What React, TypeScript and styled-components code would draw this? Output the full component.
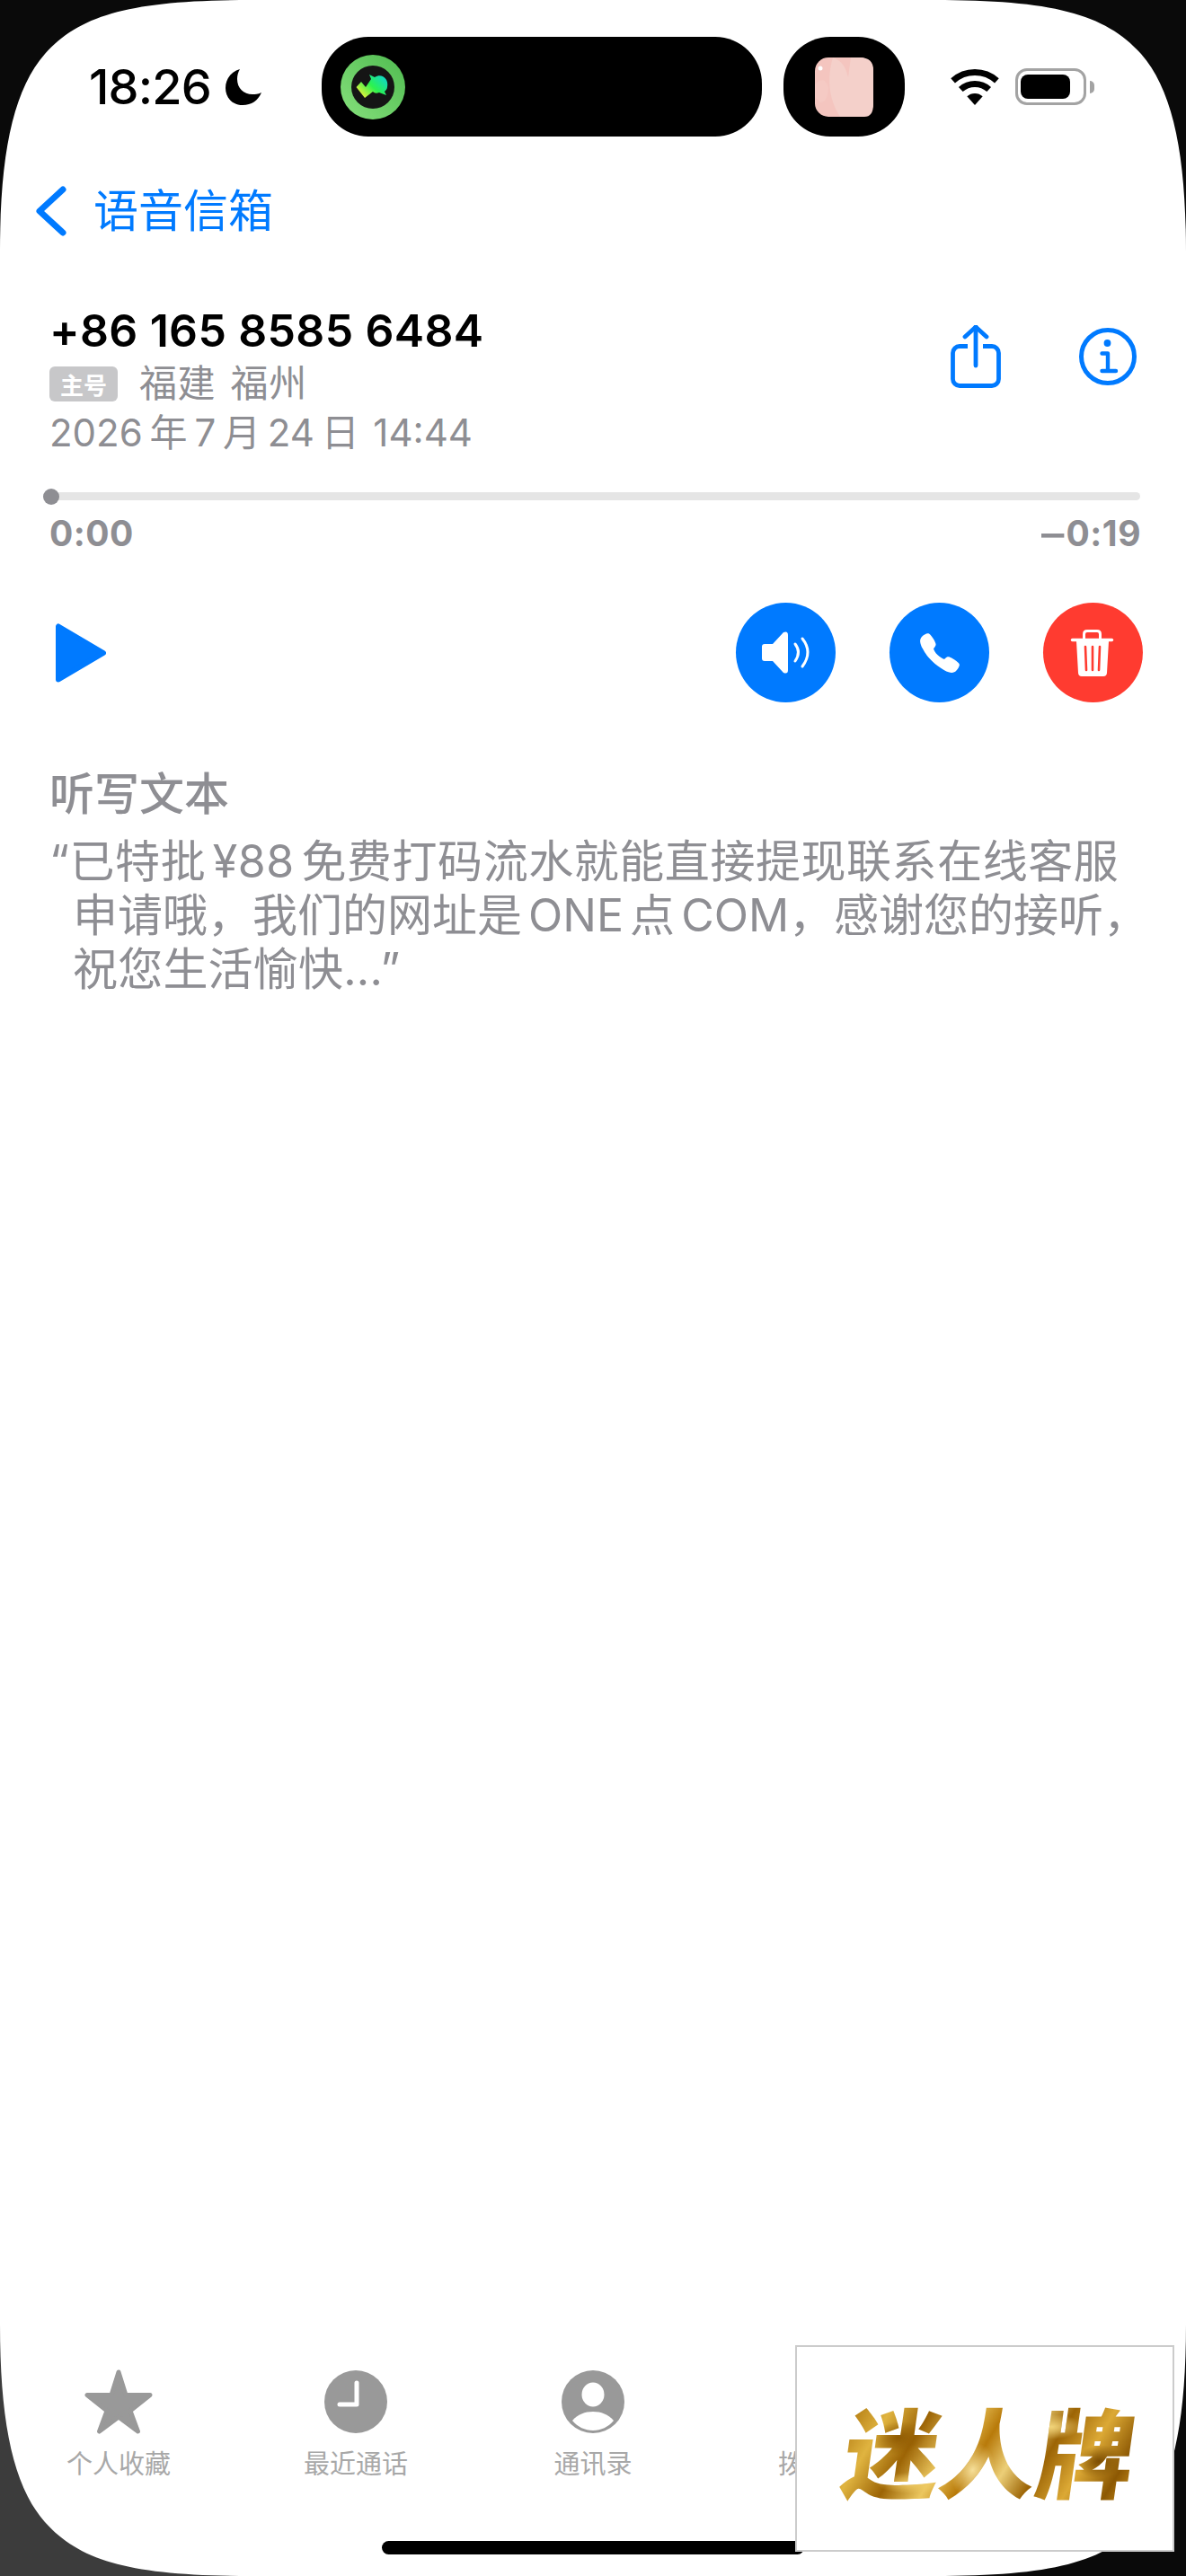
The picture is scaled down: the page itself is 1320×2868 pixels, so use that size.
import React from 'react';
import styled, { createGlobalStyle } from 'styled-components';
import { IoCall } from 'react-icons/io5';

const BLUE = '#007aff';
const RED = '#ff3b30';
const GREY = '#8e8e93';
const TAB_GREY = '#999999';

const GlobalStyle = createGlobalStyle`
  html, body {
    margin: 0;
    padding: 0;
    background: #fff;
  }
  body {
    font-family: Inter, "Noto Sans CJK SC", sans-serif;
  }
`;

const Screen = styled.div`
  position: relative;
  width: 1320px;
  height: 2868px;
  display: flex;
  flex-direction: column;
  overflow: hidden;
  background: #fff;
  font-family: Inter, "Noto Sans CJK SC", sans-serif;
`;

const Corner = styled.svg<{ $x: 'left' | 'right'; $y: 'top' | 'bottom' }>`
  position: absolute;
  width: 280px;
  height: 280px;
  ${({ $x }) => $x}: 0;
  ${({ $y }) => $y}: 0;
  transform: scale(${({ $x }) => ($x === 'left' ? 1 : -1)}, ${({ $y }) => ($y === 'top' ? 1 : -1)});
`;

const StatusBar = styled.div`
  display: flex;
  align-items: center;
  height: 111px;
  margin-top: 41px;
  padding-left: 99px;
`;

const TimeGroup = styled.div`
  display: flex;
  align-items: center;
  gap: 16px;
  width: 259px;
`;

const Clock = styled.span`
  font-size: 54px;
  font-weight: 500;
  line-height: 50px;
  letter-spacing: -0.8px;
  color: #000;
`;

const Island = styled.div`
  display: flex;
  align-items: center;
  width: 490px;
  height: 111px;
  padding-left: 21px;
  box-sizing: border-box;
  border-radius: 52px;
  background: #000;
`;

const IslandSide = styled.div`
  display: flex;
  align-items: center;
  justify-content: center;
  width: 135px;
  height: 111px;
  margin-left: 24px;
  border-radius: 52px;
  background: #000;
`;

const StatusIcons = styled.div`
  display: flex;
  align-items: center;
  margin-left: 51px;
  gap: 18px;
`;

const Battery = styled.div`
  display: flex;
  align-items: center;
  gap: 4px;
`;

const BatteryBody = styled.div`
  display: flex;
  align-items: center;
  width: 79px;
  height: 41px;
  padding-left: 3px;
  box-sizing: border-box;
  border: 3px solid #a3a3a3;
  border-radius: 13px;
`;

const BatteryLevel = styled.div`
  width: 55px;
  height: 27px;
  border-radius: 8px;
  background: #000;
`;

const BatteryCap = styled.div`
  width: 5px;
  height: 14px;
  border-radius: 0 5px 5px 0;
  background: #a3a3a3;
`;

const NavBar = styled.div`
  display: flex;
  align-items: center;
  gap: 30px;
  height: 166px;
  padding-left: 40px;
  color: ${BLUE};
`;

const NavTitle = styled.span`
  font-size: 50px;
  line-height: 60px;
`;

const Header = styled.div`
  display: flex;
  justify-content: space-between;
  margin-top: 25px;
  padding: 0 55px 0 55px;
`;

const Details = styled.div`
  display: flex;
  flex-direction: column;
`;

const PhoneNumber = styled.div`
  font-size: 50px;
  font-weight: 600;
  line-height: 50px;
  letter-spacing: 0.35px;
  color: #000;
`;

const MetaRow = styled.div`
  display: flex;
  align-items: center;
  height: 40px;
  margin-top: 14px;
`;

const SimBadge = styled.span`
  display: flex;
  align-items: center;
  justify-content: center;
  width: 76px;
  height: 39px;
  margin-right: 24px;
  border-radius: 6px;
  background: #c7c7c9;
  color: #fff;
  font-size: 26px;
  font-weight: 700;
`;

const MetaText = styled.span`
  font-size: 42px;
  line-height: 40px;
  letter-spacing: 0.6px;
  word-spacing: 4px;
  color: ${GREY};
`;

const DateText = styled.div`
  margin-top: 15px;
  font-size: 42px;
  line-height: 40px;
  word-spacing: -4px;
  color: ${GREY};
  white-space: pre;
`;

const HeaderIcons = styled.div`
  display: flex;
  align-items: center;
  gap: 87px;
  height: 70px;
  margin-top: 19px;
`;

const Track = styled.div`
  position: relative;
  height: 9px;
  margin: 46px 51px 0 50px;
  border-radius: 5px;
  background: #e5e5e5;
`;

const Knob = styled.div`
  position: absolute;
  left: -2px;
  top: -4.5px;
  width: 18px;
  height: 18px;
  border-radius: 50%;
  background: ${GREY};
`;

const TimeRow = styled.div`
  display: flex;
  justify-content: space-between;
  margin-top: 22px;
  padding: 0 50px 0 55px;
  font-size: 39px;
  font-weight: 700;
  line-height: 30px;
  letter-spacing: 0.5px;
  color: ${GREY};
`;

const RemainingDash = styled.span`
  display: inline-block;
  margin-right: 2px;
  transform: scaleX(1.3);
  transform-origin: right center;
`;

const Actions = styled.div`
  display: flex;
  align-items: center;
  justify-content: space-between;
  margin-top: 62px;
  padding: 0 48px 0 62px;
`;

const RoundButtons = styled.div`
  display: flex;
  gap: 60px;
`;

const RoundButton = styled.div<{ $color: string }>`
  display: flex;
  align-items: center;
  justify-content: center;
  width: 111px;
  height: 111px;
  border-radius: 50%;
  background: ${({ $color }) => $color};
  color: #fff;
`;

const Transcript = styled.div`
  margin-top: 77px;
  padding-left: 55px;
  color: ${GREY};
`;

const TranscriptTitle = styled.div`
  font-size: 50px;
  font-weight: 500;
  line-height: 50px;
`;

const TranscriptBody = styled.div`
  margin-top: 20px;
`;

const TranscriptLine = styled.div<{ $indent: number; $spacing: number }>`
  padding-left: ${({ $indent }) => $indent}px;
  font-size: 50px;
  line-height: 60px;
  letter-spacing: ${({ $spacing }) => $spacing}px;
  word-spacing: -7px;
  white-space: pre;
`;

const TabBar = styled.div`
  display: grid;
  grid-template-columns: repeat(5, 264px);
  margin-top: auto;
  padding-bottom: 109px;
`;

const Tab = styled.div<{ $active?: boolean }>`
  display: flex;
  flex-direction: column;
  align-items: center;
  color: ${({ $active }) => ($active ? BLUE : TAB_GREY)};
`;

const TabIcon = styled.div`
  display: flex;
  align-items: center;
  justify-content: center;
  height: 76px;
  margin-bottom: 17px;
`;

const TabLabel = styled.span<{ $active?: boolean }>`
  font-size: 29px;
  line-height: 30px;
  color: ${({ $active }) => ($active ? BLUE : '#a8a8a8')};
`;

const HomeBar = styled.div`
  position: absolute;
  left: 425px;
  bottom: 24px;
  width: 470px;
  height: 15px;
  border-radius: 8px;
  background: #000;
`;

const Watermark = styled.div`
  position: absolute;
  left: 885px;
  top: 2611px;
  width: 422px;
  height: 230px;
  box-sizing: border-box;
  display: flex;
  align-items: center;
  justify-content: center;
  padding-left: 12px;
  background: #fff;
  border: 2px solid #cccccc;
`;

const GoldText = styled.span`
  display: inline-block;
  transform: skewX(-8deg);
  font-family: "Noto Sans CJK SC", sans-serif;
  font-size: 108px;
  font-weight: 900;
  line-height: 120px;
  background:
    radial-gradient(ellipse 30px 18px at 18% 40%, #8f5a02 0%, transparent 100%),
    radial-gradient(ellipse 24px 30px at 45% 70%, #f6e09a 0%, transparent 100%),
    radial-gradient(ellipse 34px 14px at 70% 30%, #f2d47a 0%, transparent 100%),
    radial-gradient(ellipse 26px 18px at 88% 62%, #7d4e02 0%, transparent 100%),
    radial-gradient(ellipse 40px 12px at 25% 82%, #f0cc66 0%, transparent 100%),
    linear-gradient(
      115deg,
      #a96f08 0%,
      #e0b440 14%,
      #9c6405 26%,
      #ecc75f 38%,
      #b87a0a 48%,
      #eccf78 58%,
      #9c6405 68%,
      #dca935 80%,
      #8c5803 92%,
      #c98f1c 100%
    );
  -webkit-background-clip: text;
  background-clip: text;
  color: transparent;
`;

const CORNER_PATH = 'M0 0H280C150 0 90 15 50 60C15 100 0 170 0 280Z';

const Moon = () => (
  <svg width='40' height='40' viewBox='0 0 40 40'>
    <path
      fill='#000'
      d='M16 0C6 3 0 11 0 21C0 32 8 40 19 40C29 40 36 35 40 26C36 28 33 28 30 28C20 28 13 21 13 11C13 7 14 3 16 0Z'
    />
  </svg>
);

const AppBadge = () => (
  <svg width='72' height='72' viewBox='0 0 72 72'>
    <defs>
      <linearGradient id='ring' x1='0' y1='1' x2='1' y2='0'>
        <stop offset='0' stopColor='#86e07c' />
        <stop offset='1' stopColor='#4fbb50' />
      </linearGradient>
      <linearGradient id='bolt' x1='0.1' y1='0.9' x2='1' y2='0.2'>
        <stop offset='0' stopColor='#f4f03a' />
        <stop offset='0.5' stopColor='#2cf24e' />
        <stop offset='1' stopColor='#10d8c8' />
      </linearGradient>
    </defs>
    <circle cx='36' cy='36' r='36' fill='url(#ring)' />
    <circle cx='36' cy='36' r='24' fill='#151515' />
    <path fill='url(#bolt)' d='M17.5 36L23 30L28 36L34 27L32 22L38 25C46 20 54 27 52 36C52 38 50 40 49 41L51 45L43 42C40 43 38 43 36 41L27 48Z' />
  </svg>
);

const PinkThumb = () => (
  <svg width='65' height='66' viewBox='0 0 65 66'>
    <rect width='65' height='66' rx='15' fill='#f4c5bf' />
    <path fill='#f4d0ca' d='M20 0C14 20 14 44 28 66H55Q65 66 65 52V14Q65 0 50 0H40L37 22C34 10 30 4 20 0Z' />
    <path fill='#f5cac4' d='M0 30C6 24 12 22 15 34C14 44 12 50 6 50L0 44Z' />
    <circle cx='6' cy='12' r='2.5' fill='#fff' />
  </svg>
);

const Wifi = () => (
  <svg width='54' height='40' viewBox='0 0 54 40'>
    <path fill='none' stroke='#000' strokeWidth='7' d='M2.6 12.9A36.5 36.5 0 0 1 51.4 12.9' />
    <path fill='none' stroke='#000' strokeWidth='7' d='M11.3 22.5A23.5 23.5 0 0 1 42.7 22.5' />
    <path fill='#000' d='M27 40L18.3 30.3A13 13 0 0 1 35.7 30.3Z' />
  </svg>
);

const BackChevron = () => (
  <svg width='34' height='56' viewBox='0 0 34 56' style={{ flexShrink: 0 }}>
    <path fill='none' stroke={BLUE} strokeWidth='7' strokeLinecap='round' strokeLinejoin='round' d='M30 4L4 28L30 52' />
  </svg>
);

const ShareIcon = () => (
  <svg width='56' height='70' viewBox='0 0 56 70'>
    <g fill='none' stroke={BLUE} strokeWidth='4.8' strokeLinecap='round' strokeLinejoin='round'>
      <path strokeLinecap='butt' d='M19 23.5H10A7.5 7.5 0 0 0 2.5 31V60A7.5 7.5 0 0 0 10 67.5H46A7.5 7.5 0 0 0 53.5 60V31A7.5 7.5 0 0 0 46 23.5H36' />
      <path d='M28 2V45' />
      <path d='M16 13L28 2L40 13' />
    </g>
  </svg>
);

const InfoIcon = () => (
  <svg width='64' height='64' viewBox='0 0 64 64'>
    <circle cx='32' cy='32' r='29.5' fill='none' stroke={BLUE} strokeWidth='5' />
    <circle cx='31.5' cy='17' r='3.9' fill={BLUE} />
    <path fill='none' stroke={BLUE} strokeWidth='4.4' strokeLinecap='round' strokeLinejoin='round' d='M25.5 28.5H32V48M25.5 48H41' />
  </svg>
);

const PlayIcon = () => (
  <svg width='56' height='66' viewBox='0 0 56 66'>
    <path
      fill={BLUE}
      stroke={BLUE}
      strokeWidth='6'
      strokeLinejoin='round'
      d='M3 3.5V62.5L53 33Z'
    />
  </svg>
);

const SpeakerIcon = () => (
  <svg width='111' height='111' viewBox='0 0 111 111'>
    <path fill='#fff' d='M32 46H41L53 33Q58 31 58 36V75Q58 80 53 78L41 65H32Q29 65 29 62V49Q29 46 32 46Z' />
    <g fill='none' stroke='#fff' strokeWidth='3' strokeLinecap='round'>
      <path d='M66 46Q73 55 66 65' />
      <path d='M74 40Q86 55 74 71' />
    </g>
  </svg>
);

const TrashIcon = () => (
  <svg width='111' height='111' viewBox='0 0 111 111'>
    <path fill='none' stroke='#fff' strokeWidth='3' d='M45.5 41V35Q45.5 31.5 49 31.5H60Q63.5 31.5 63.5 35V41' />
    <path fill='none' stroke='#fff' strokeWidth='3.4' strokeLinecap='round' d='M32.5 41.5H76.5' />
    <path fill='#fff' d='M37 43H73L71 78Q70.8 82 67 82H43Q39.2 82 39 78Z' />
    <path fill='none' stroke={RED} strokeWidth='2.6' strokeLinecap='round' d='M47 49L48 75M55 49V75M63 49L62 75' />
  </svg>
);

const StarIcon = () => (
  <svg width='76' height='72' viewBox='0 0 76 72'>
    <path
      fill={TAB_GREY}
      stroke={TAB_GREY}
      strokeWidth='5'
      strokeLinejoin='round'
      d='M38 3L46 28.5H73L51 46L59.5 69L38 53L16.5 69L25 46L3 28.5H30Z'
    />
  </svg>
);

const RecentIcon = () => (
  <svg width='70' height='70' viewBox='0 0 70 70'>
    <circle cx='35' cy='35' r='35' fill={TAB_GREY} />
    <path fill='none' stroke='#fff' strokeWidth='5' strokeLinecap='round' strokeLinejoin='round' d='M36 14V38H17' />
  </svg>
);

const ContactIcon = () => (
  <svg width='70' height='70' viewBox='0 0 70 70'>
    <circle cx='35' cy='35' r='35' fill={TAB_GREY} />
    <ellipse cx='35' cy='27' rx='12.5' ry='13.5' fill='#fff' />
    <path fill='#fff' d='M12 56C18 49 26 46 35 46C44 46 52 49 58 56C52 63 44 67 35 67C26 67 18 63 12 56Z' />
  </svg>
);

const KeypadIcon = () => (
  <svg width='70' height='70' viewBox='0 0 70 70' fill={TAB_GREY}>
    {[12, 35, 58].flatMap((y) =>
      [12, 35, 58].map((x) => <circle key={`${x}-${y}`} cx={x} cy={y} r='8' />),
    )}
  </svg>
);

const VoicemailIcon = () => (
  <svg width='76' height='40' viewBox='0 0 76 40'>
    <g fill='none' stroke={BLUE} strokeWidth='6'>
      <circle cx='18' cy='20' r='15' />
      <circle cx='58' cy='20' r='15' />
      <path d='M18 35H58' />
    </g>
  </svg>
);

const App: React.FC = () => (
  <Screen>
    <GlobalStyle />

    <StatusBar>
      <TimeGroup>
        <Clock>18:26</Clock>
        <Moon />
      </TimeGroup>
      <Island>
        <AppBadge />
      </Island>
      <IslandSide>
        <PinkThumb />
      </IslandSide>
      <StatusIcons>
        <Wifi />
        <Battery>
          <BatteryBody>
            <BatteryLevel />
          </BatteryBody>
          <BatteryCap />
        </Battery>
      </StatusIcons>
    </StatusBar>

    <NavBar>
      <BackChevron />
      <NavTitle>语音信箱</NavTitle>
    </NavBar>

    <Header>
      <Details>
        <PhoneNumber>+86 165 8585 6484</PhoneNumber>
        <MetaRow>
          <SimBadge>主号</SimBadge>
          <MetaText>福建 福州</MetaText>
        </MetaRow>
        <DateText>2026 年 7 月 24 日  14:44</DateText>
      </Details>
      <HeaderIcons>
        <ShareIcon />
        <InfoIcon />
      </HeaderIcons>
    </Header>

    <Track>
      <Knob />
    </Track>
    <TimeRow>
      <span>0:00</span>
      <span>
        <RemainingDash>–</RemainingDash>0:19
      </span>
    </TimeRow>

    <Actions>
      <PlayIcon />
      <RoundButtons>
        <RoundButton $color={BLUE}>
          <SpeakerIcon />
        </RoundButton>
        <RoundButton $color={BLUE}>
          <IoCall size={50} />
        </RoundButton>
        <RoundButton $color={RED}>
          <TrashIcon />
        </RoundButton>
      </RoundButtons>
    </Actions>

    <Transcript>
      <TranscriptTitle>听写文本</TranscriptTitle>
      <TranscriptBody>
        <TranscriptLine $indent={0} $spacing={0.55}>
          “已特批 ¥88 免费打码流水就能直接提现联系在线客服
        </TranscriptLine>
        <TranscriptLine $indent={26} $spacing={0}>
          申请哦，我们的网址是 ONE 点 COM，感谢您的接听，
        </TranscriptLine>
        <TranscriptLine $indent={26} $spacing={0.2}>
          祝您生活愉快...”
        </TranscriptLine>
      </TranscriptBody>
    </Transcript>

    <TabBar>
      <Tab>
        <TabIcon>
          <StarIcon />
        </TabIcon>
        <TabLabel>个人收藏</TabLabel>
      </Tab>
      <Tab>
        <TabIcon>
          <RecentIcon />
        </TabIcon>
        <TabLabel>最近通话</TabLabel>
      </Tab>
      <Tab>
        <TabIcon>
          <ContactIcon />
        </TabIcon>
        <TabLabel>通讯录</TabLabel>
      </Tab>
      <Tab>
        <TabIcon>
          <KeypadIcon />
        </TabIcon>
        <TabLabel>拨号键盘</TabLabel>
      </Tab>
      <Tab $active>
        <TabIcon>
          <VoicemailIcon />
        </TabIcon>
        <TabLabel $active>语音信箱</TabLabel>
      </Tab>
    </TabBar>

    <Corner $x='left' $y='top' viewBox='0 0 280 280'>
      <path fill='#0a0a0a' d={CORNER_PATH} />
    </Corner>
    <Corner $x='right' $y='top' viewBox='0 0 280 280'>
      <path fill='#0a0a0a' d={CORNER_PATH} />
    </Corner>
    <Corner $x='left' $y='bottom' viewBox='0 0 280 280'>
      <path fill='#3c3c3c' d={CORNER_PATH} />
    </Corner>
    <Corner $x='right' $y='bottom' viewBox='0 0 280 280'>
      <path fill='#0a0a0a' d={CORNER_PATH} />
    </Corner>

    <HomeBar />
    <Watermark>
      <GoldText>迷人牌</GoldText>
    </Watermark>
  </Screen>
);

export default App;
